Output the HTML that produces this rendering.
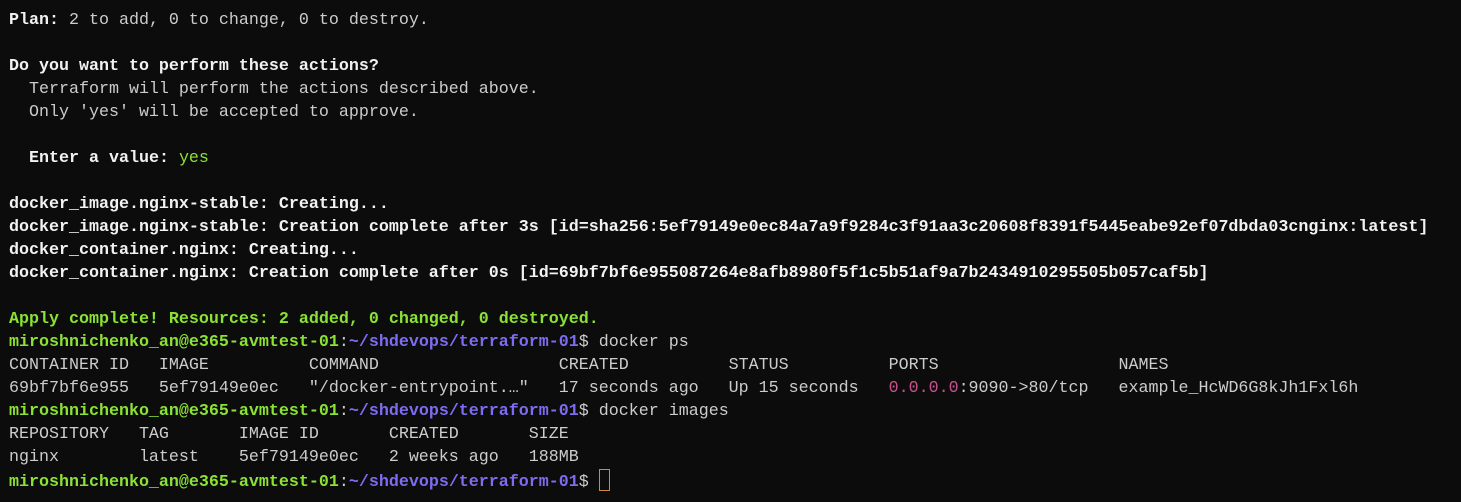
<!DOCTYPE html>
<html><head><meta charset="utf-8"><style>
html,body{margin:0;background:#0c0c0c;width:1461px;height:502px;overflow:hidden}
pre{margin:0;padding:9px 0 0 9px;font-family:"Liberation Mono",monospace;font-size:16.67px;line-height:23px;color:#cccccc}
b{color:#f2f2f2}
.g{color:#8ae234;font-weight:bold}
.gy{color:#8ae234}
.p{color:#7d6cf2;font-weight:bold}
.m{color:#c8508c}
.cur{display:inline-block;width:9px;height:20px;border:1px solid #d08a3c;vertical-align:-5px}
</style></head><body><pre><b>Plan:</b> 2 to add, 0 to change, 0 to destroy.

<b>Do you want to perform these actions?</b>
  Terraform will perform the actions described above.
  Only 'yes' will be accepted to approve.

  <b>Enter a value:</b> <span class="gy">yes</span>

<b>docker_image.nginx-stable: Creating...</b>
<b>docker_image.nginx-stable: Creation complete after 3s [id=sha256:5ef79149e0ec84a7a9f9284c3f91aa3c20608f8391f5445eabe92ef07dbda03cnginx:latest]</b>
<b>docker_container.nginx: Creating...</b>
<b>docker_container.nginx: Creation complete after 0s [id=69bf7bf6e955087264e8afb8980f5f1c5b51af9a7b2434910295505b057caf5b]</b>

<span class="g">Apply complete! Resources: 2 added, 0 changed, 0 destroyed.</span>
<span class="g">miroshnichenko_an@e365-avmtest-01</span>:<span class="p">~/shdevops/terraform-01</span>$ docker ps
CONTAINER ID   IMAGE          COMMAND                  CREATED          STATUS          PORTS                  NAMES
69bf7bf6e955   5ef79149e0ec   "/docker-entrypoint.…"   17 seconds ago   Up 15 seconds   <span class="m">0.0.0.0</span>:9090->80/tcp   example_HcWD6G8kJh1Fxl6h
<span class="g">miroshnichenko_an@e365-avmtest-01</span>:<span class="p">~/shdevops/terraform-01</span>$ docker images
REPOSITORY   TAG       IMAGE ID       CREATED       SIZE
nginx        latest    5ef79149e0ec   2 weeks ago   188MB
<span class="g">miroshnichenko_an@e365-avmtest-01</span>:<span class="p">~/shdevops/terraform-01</span>$ <span class="cur"></span></pre></body></html>
